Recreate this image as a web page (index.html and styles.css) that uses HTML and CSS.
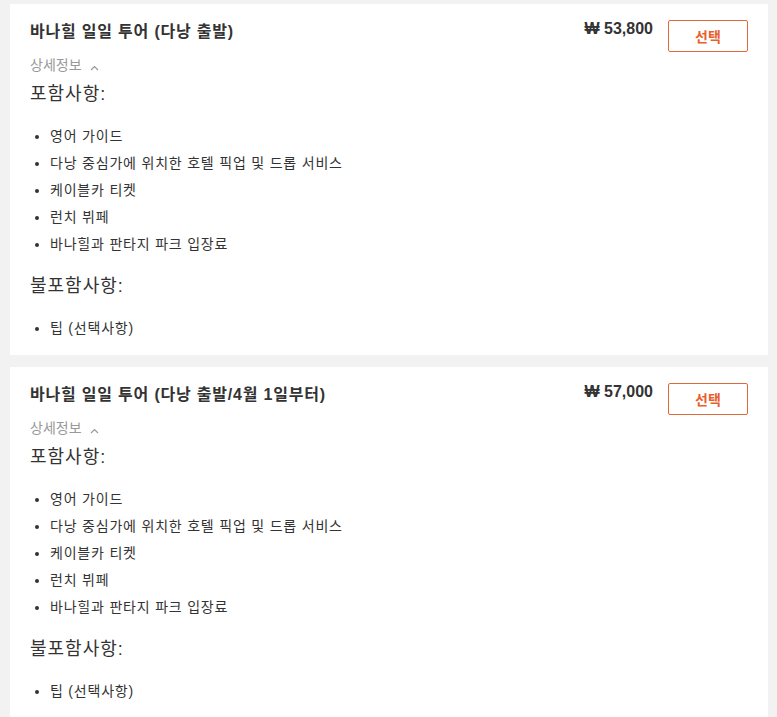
FILE: index.html
```html
<!DOCTYPE html>
<html lang="ko">
<head>
<meta charset="utf-8">
<title>바나힐 일일 투어</title>
<link rel="stylesheet" href="styles.css">
</head>
<body>
<div class="list">
  <section class="card">
    <div class="head">
      <h2 class="title">바나힐 일일 투어 (다낭 출발)</h2>
      <div class="price">₩ 53,800</div>
      <button class="select">선택</button>
    </div>
    <div class="detail">상세정보 <svg class="chev" width="9" height="6" viewBox="0 0 9 6"><polyline points="1,5 4.5,1.5 8,5" fill="none" stroke="#999" stroke-width="1.2"/></svg></div>
    <h3 class="sub">포함사항:</h3>
    <ul class="items">
      <li>영어 가이드</li>
      <li>다낭 중심가에 위치한 호텔 픽업 및 드롭 서비스</li>
      <li>케이블카 티켓</li>
      <li>런치 뷔페</li>
      <li>바나힐과 판타지 파크 입장료</li>
    </ul>
    <h3 class="sub">불포함사항:</h3>
    <ul class="items last">
      <li>팁 (선택사항)</li>
    </ul>
  </section>
  <section class="card">
    <div class="head">
      <h2 class="title">바나힐 일일 투어 (다낭 출발/4월 1일부터)</h2>
      <div class="price">₩ 57,000</div>
      <button class="select">선택</button>
    </div>
    <div class="detail">상세정보 <svg class="chev" width="9" height="6" viewBox="0 0 9 6"><polyline points="1,5 4.5,1.5 8,5" fill="none" stroke="#999" stroke-width="1.2"/></svg></div>
    <h3 class="sub">포함사항:</h3>
    <ul class="items">
      <li>영어 가이드</li>
      <li>다낭 중심가에 위치한 호텔 픽업 및 드롭 서비스</li>
      <li>케이블카 티켓</li>
      <li>런치 뷔페</li>
      <li>바나힐과 판타지 파크 입장료</li>
    </ul>
    <h3 class="sub">불포함사항:</h3>
    <ul class="items last">
      <li>팁 (선택사항)</li>
    </ul>
  </section>
</div>
</body>
</html>
```
FILE: styles.css
```css
html, body {
  margin: 0;
  padding: 0;
  background: #f2f2f2;
}
body {
  font-family: "Liberation Sans", "Noto Sans CJK KR", sans-serif;
  color: #333;
}
.list {
  display: flex;
  flex-direction: column;
  gap: 12px;
  padding: 4px 9px 0 10px;
}
.card {
  background: #fff;
  padding: 16px 20px 13px 20px;
}
.head {
  display: flex;
  align-items: flex-start;
}
.title {
  flex: 1;
  margin: 1px 0 0;
  font-size: 16px;
  line-height: 22px;
  font-weight: bold;
  letter-spacing: 0.8px;
  color: #333;
}
.price {
  font-size: 16px;
  font-weight: bold;
  line-height: 16px;
  color: #333;
  margin-top: 1px;
  margin-right: 15px;
}
.select {
  width: 80px;
  height: 32px;
  border: 1px solid #e0693b;
  border-radius: 2px;
  background: #fff;
  color: #e8602c;
  font-family: "Liberation Sans", "Noto Sans CJK KR", sans-serif;
  font-size: 14px;
  font-weight: bold;
  padding: 0;
}
.detail {
  margin-top: 4px;
  font-size: 14px;
  line-height: 18px;
  color: #999;
}
.chev {
  margin-left: 5px;
  vertical-align: -1px;
}
.sub {
  margin: 8px 0 0;
  font-size: 18px;
  line-height: 24px;
  font-weight: normal;
  letter-spacing: 1px;
  color: #333;
}
.items {
  margin: 17px 0 16px;
  padding-left: 20px;
  font-size: 14px;
  line-height: 27px;
  letter-spacing: 0.8px;
  color: #333;
}
.items.last {
  margin-bottom: 0;
}
.items + .sub {
  margin-top: 0;
}
```
